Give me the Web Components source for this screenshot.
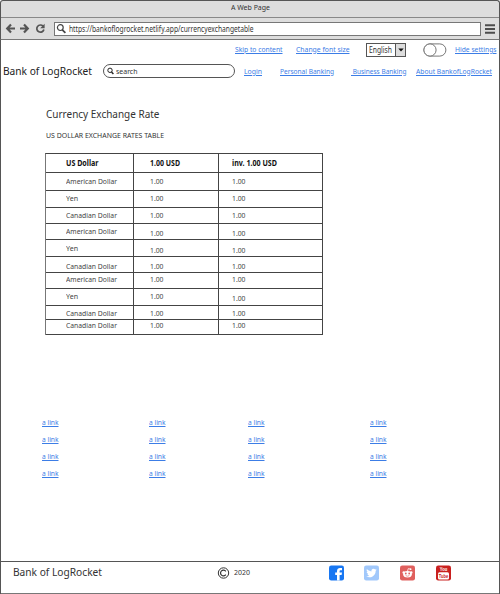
<!DOCTYPE html>
<html lang="en">
<head>
<meta charset="utf-8">
<title>A Web Page</title>
<style>
html,body{margin:0;padding:0;width:500px;height:594px;overflow:hidden;background:#fff}
body{font:7.9px/10px "Noto Sans","Open Sans",sans-serif;color:#333}
</style>
</head>
<body>
<browser-window></browser-window>
<script>
/* Text run condensed horizontally to the width in its "w" attribute. */
class FitText extends HTMLElement {
  connectedCallback() {
    const link = this.hasAttribute('link');
    const w = parseFloat(this.getAttribute('w'));
    this.attachShadow({mode: 'open'}).innerHTML = `<style>
      :host{display:block;white-space:pre;width:${w}px}
      span{display:inline-block;transform-origin:0 50%}
      .link{color:#3c7de6;text-decoration:underline;text-decoration-thickness:1px;text-underline-offset:1px}
      </style><span class="${link ? 'link' : ''}"><slot></slot></span>`;
    const span = this.shadowRoot.querySelector('span');
    const now = span.getBoundingClientRect().width;
    if (w && now) span.style.transform = `scaleX(${w / now})`;
  }
}
customElements.define('fit-text', FitText);

const define = (name, html) => customElements.define(name, class extends HTMLElement {
  connectedCallback() {
    if (this.shadowRoot) return;
    this.attachShadow({mode: 'open'}).innerHTML = html;
  }
});

define('browser-chrome', `<style>
  :host{display:block;height:40px;box-sizing:border-box;background:#ddd;border:1px solid #555;border-bottom-color:#777;border-radius:3px 3px 0 0}
  .title{height:16px;border-bottom:1px solid #888;display:flex;justify-content:center;font-size:7.900px;line-height:13px}
  .bar{height:21px;display:grid;grid-template-columns:53px 427px 1fr;align-items:center}
  .url{height:14px;box-sizing:border-box;border:1px solid #777;background:#fff;display:grid;grid-template-columns:14px 1fr;align-items:center;font-size:8.200px;line-height:11px}
  .url fit-text{margin-top:-1px}
  svg{display:block}
  .menu{margin-left:4px}
  </style>
  <div class="title"><fit-text w="39">A Web Page</fit-text></div>
  <div class="bar">
    <svg width="53" height="21" fill="none" stroke="#555" stroke-width="2.200">
      <path d="M6 10.500h8M10 6.500L6.200 10.500L10 14.500M19 10.500h8M23 6.500L26.800 10.500L23 14.500"/>
      <path d="M42.100 8.200A3.600 3.600 0 1 0 42.900 11.500" stroke-width="1.700"/>
      <path d="M43.600 5.800v4.400h-4.400z" fill="#555" stroke="none"/>
    </svg>
    <div class="url">
      <svg width="14" height="12" fill="none" stroke="#444"><circle cx="5.300" cy="4.600" r="2.900" stroke-width="1.200"/><path d="M7.300 6.800L10.400 9.800" stroke-width="1.700"/></svg>
      <fit-text w="184.500">https://bankoflogrocket.netlify.app/currencyexchangetable</fit-text>
    </div>
    <svg class="menu" width="12" height="12" stroke="#4c4c4c" stroke-width="1.900"><path d="M0 2.200h10M0 6h10M0 9.800h10"/></svg>
  </div>`);

define('lang-select', `<style>
  :host{display:grid;grid-template-columns:28px 10px;box-sizing:border-box;width:40px;height:14px;border:1px solid #555;background:#fff}
  .t{padding-left:2px;line-height:11px;font-size:8px}
  .a{background:#ddd;border-left:1px solid #555;display:flex;align-items:center;justify-content:center}
  </style><div class="t"><fit-text w="23">English</fit-text></div>
  <div class="a"><svg width="6" height="4"><path d="M.3.5h5.400L3 3.500z" fill="#111"/></svg></div>`);

define('toggle-switch', `<style>:host{display:block;margin-left:-1px}svg{display:block}</style>
  <svg width="24" height="14" fill="#fff" stroke="#777"><rect x=".9" y=".9" width="22" height="12.200" rx="6.100"/><circle cx="7" cy="7" r="6.100"/></svg>`);

define('search-box', `<style>
  :host{display:flex;align-items:center;box-sizing:border-box;width:132px;height:14px;border:1px solid #555;border-radius:7px;padding-left:3px;gap:1.500px;line-height:12px;background:#fff}
  svg{display:block}</style>
  <svg width="7" height="8" fill="none" stroke="#222"><circle cx="3" cy="3.300" r="2.200" stroke-width="1"/><path d="M4.500 5L6.400 7" stroke-width="1.400"/></svg>
  <fit-text w="21.500">search</fit-text>`);

define('site-header', `<style>
  :host{display:block}
  .row{display:grid;align-items:center}
  .top{height:20px;grid-template-columns:234px 60.500px 70.500px 57.500px 31.500px 1fr;font-size:7.800px}
  .top fit-text{margin-top:-3px}
  .main{height:24px;margin-top:-1px;grid-template-columns:102px 140.500px 36px 71px 65px 1fr;font-size:7.800px}
  .main fit-text{margin-top:-.500px}
  .brand{padding-left:2px;font-size:11.200px;line-height:14px;color:#222}
  </style>
  <div class="row top"><span></span>
    <fit-text link w="47.500">Skip to content</fit-text>
    <fit-text link w="53.500">Change font size</fit-text>
    <lang-select></lang-select><toggle-switch></toggle-switch>
    <fit-text link w="41.500">Hide settings</fit-text></div>
  <div class="row main">
    <fit-text class="brand" w="89">Bank of LogRocket</fit-text>
    <search-box></search-box>
    <fit-text link w="18">Login</fit-text>
    <fit-text link w="54">Personal Banking</fit-text>
    <fit-text link w="55.500"> Business Banking</fit-text>
    <fit-text link w="76">About BankofLogRocket</fit-text></div>`);

customElements.define('rate-table', class extends HTMLElement {
  connectedCallback() {
    /* [row height, name, text offset from the row's top for each column] */
    const rows = [
      [19, 'US Dollar', 4, 4, 4], [18, 'American Dollar', 3, 3, 3], [17, 'Yen', 2, 2, 2],
      [16, 'Canadian Dollar', 2, 2, 2], [16, 'American Dollar', 2, 4, 4], [17, 'Yen', 3, 5, 5],
      [16, 'Canadian Dollar', 4, 4, 4], [16, 'American Dollar', 1, 1, 1], [17, 'Yen', 2, 2, 4],
      [14, 'Canadian Dollar', 2, 2, 2], [15, 'Canadian Dollar', 0, 0, 0]];
    const widths = {'American Dollar': 51, 'Yen': 12, 'Canadian Dollar': 51};
    this.attachShadow({mode: 'open'}).innerHTML = `<style>
      :host{display:block;box-sizing:border-box;width:278px;border-top:1px solid #444;border-left:1px solid #777}
      .r{display:grid;grid-template-columns:88px 85px 1fr;box-sizing:border-box;color:#444}
      .r>div{box-sizing:border-box;border-right:1px solid #444;border-bottom:1px solid #444;padding-left:19.500px}
      .r>div:nth-child(2){padding-left:16px}.r>div:nth-child(3){padding-left:12.500px}
      .r:first-of-type{font-weight:700;color:#111}
      </style>` + rows.map((r, i) => {
        const texts = i ? [r[1], '1.00', '1.00'] : [r[1], '1.00 USD', 'inv. 1.00 USD'];
        const w = i ? [widths[r[1]], 13.5, 13.5] : [32.5, 30, 45];
        return `<div class="r" style="height:${r[0]}px">` + texts.map((t, c) =>
          `<div style="padding-top:${r[c + 2]}px"><fit-text w="${w[c]}">${t}</fit-text></div>`).join('') + '</div>';
      }).join('');
  }
});

define('link-grid', `<style>
  :host{display:grid;grid-template-columns:107.500px 99px 122px 1fr;grid-auto-rows:17px;font-size:7.800px}
  </style>` + '<fit-text link w="16.500">a link</fit-text>'.repeat(16));

define('site-footer', `<style>
  :host{display:grid;grid-template-columns:217px 15.500px 95.500px 1fr;height:33px;box-sizing:border-box;border-top:1px solid #555;border-bottom:1px solid #777;padding-top:3px;align-items:start}
  .brand{padding-left:12px;font-size:11.200px;line-height:14px}
  .y{padding-top:2px;font-size:7.400px}
  .icons{display:grid;grid-template-columns:35px 36px 35.500px 16px}
  svg{display:block;overflow:visible}
  </style>
  <fit-text class="brand" w="89">Bank of LogRocket</fit-text>
  <svg width="13" height="14" fill="none" stroke="#333"><circle cx="5.500" cy="8" r="5.200" stroke-width="1"/><path d="M7.800 6.300A2.900 2.900 0 1 0 7.800 9.700" stroke-width="1.200"/></svg>
  <div class="y"><fit-text w="16">2020</fit-text></div>
  <div class="icons">
    <svg width="15" height="16" viewBox="0 0 15 16"><rect y=".5" width="15" height="15" rx="2.200" fill="#1877f2"/><path d="M8 15.500V10H6.200V7.600H8V6C8 3.900 9.300 3 11 3h2v2.300h-1.200c-1 0-1.200.5-1.200 1.200v1.100H13L12.600 10h-2v5.500z" fill="#fff"/></svg>
    <svg width="15" height="16" viewBox="0 0 15 16"><rect y=".5" width="15" height="15" rx="2.200" fill="#a1c8fb"/><path transform="translate(2.200 2.700) scale(.44)" fill="#fff" d="M24 4.600c-.9.400-1.800.7-2.800.8 1-.6 1.800-1.600 2.200-2.700-1 .6-2 1-3.100 1.200A4.900 4.900 0 0 0 11.900 8.400C7.700 8.200 4.100 6.200 1.700 3.200.4 5.400 1 8.300 3.200 9.700c-.8 0-1.600-.2-2.200-.6 0 2.300 1.600 4.400 3.900 4.900-.7.200-1.500.2-2.200.1.600 2 2.400 3.400 4.600 3.400A9.900 9.900 0 0 1 0 19.500 14 14 0 0 0 21.500 7.100c1-.7 1.800-1.600 2.500-2.500z"/></svg>
    <svg width="15" height="16" viewBox="0 0 15 16"><rect y=".5" width="15" height="15" rx="2.200" fill="#e0605e"/><ellipse cx="7.500" cy="9.200" rx="4.300" ry="3.200" fill="#fff"/><circle cx="3.700" cy="7.500" r="1.200" fill="#fff"/><circle cx="11.300" cy="7.500" r="1.200" fill="#fff"/><path d="M7.500 6.200L8.300 3.600l2 .5" fill="none" stroke="#fff" stroke-width=".8"/><circle cx="10.600" cy="4.200" r=".9" fill="#fff"/><circle cx="5.800" cy="8.500" r=".9" fill="#e0605e"/><circle cx="9.200" cy="8.500" r=".9" fill="#e0605e"/><path d="M5.700 10.600q1.800 1.200 3.600 0" fill="none" stroke="#e0605e" stroke-width=".6"/></svg>
    <svg width="15" height="16" viewBox="0 0 15 16" font-family="Liberation Sans,sans-serif" font-weight="700" text-anchor="middle"><rect y=".5" width="15" height="15" rx="2.200" fill="#c9201f"/><rect x="2" y="7.200" width="11" height="7.200" rx="1.500" fill="#fff"/><text x="7.500" y="6.400" font-size="5.800" textLength="7.500" lengthAdjust="spacingAndGlyphs" fill="#fff">You</text><text x="7.500" y="13" font-size="5.800" textLength="9.500" lengthAdjust="spacingAndGlyphs" fill="#c9201f">Tube</text></svg>
  </div>`);

define('browser-window', `<style>
  :host{display:flex;flex-direction:column;width:500px;height:594px;background:#fff}
  .page{flex:1;display:flex;flex-direction:column;border-left:1px solid #555;border-right:1px solid #555}
  .content{padding:23px 0 0 44px;flex:1}
  h1{margin:0;padding-left:1px;font-size:11.200px;line-height:16px;font-weight:400}
  .sub{padding:8px 0 13px 1px;line-height:10px}
  link-grid{margin:82px 0 0 -3.500px}
  </style>
  <browser-chrome></browser-chrome>
  <div class="page">
    <site-header></site-header>
    <div class="content">
      <h1><fit-text w="113.500">Currency Exchange Rate</fit-text></h1>
      <div class="sub"><fit-text w="118">US DOLLAR EXCHANGE RATES TABLE</fit-text></div>
      <rate-table></rate-table>
      <link-grid></link-grid>
    </div>
    <site-footer></site-footer>
  </div>`);
</script>
</body>
</html>
